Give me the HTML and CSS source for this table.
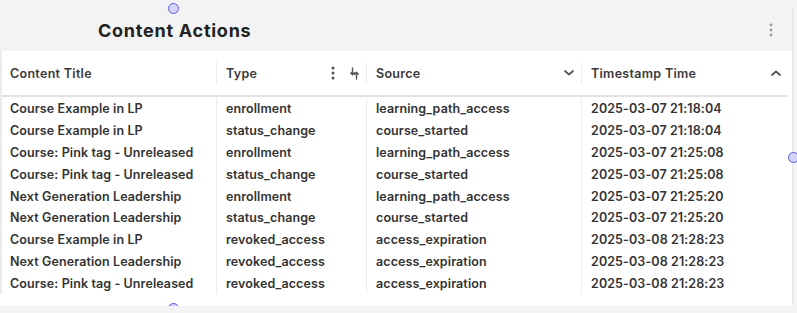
FILE: index.html
```html
<!DOCTYPE html>
<html lang="en">
<head>
  <meta charset="UTF-8" />
  <title>Content Actions</title>
  <link rel="stylesheet" href="styles.css">
</head>
<body>

<div class="card">
  <div class="card-head">
    <h2>Content Actions</h2>
    <svg class="kebab light" width="4" height="14" viewBox="0 0 4 14"><circle cx="2" cy="2" r="1.4"/><circle cx="2" cy="7" r="1.4"/><circle cx="2" cy="12" r="1.4"/></svg>
  </div>

  <div class="table">
    <div class="row head">
      <div class="cell">Content Title</div>
      <div class="cell">
        <span>Type</span>
        <span class="tools">
          <svg class="kebab" width="4" height="14" viewBox="0 0 4 14"><circle cx="2" cy="2" r="1.5"/><circle cx="2" cy="7" r="1.5"/><circle cx="2" cy="12" r="1.5"/></svg>
          <svg class="sort" width="9" height="13" viewBox="0 0 9 13"><path d="M2.5 1v6.5M0.8 5.8l1.7 1.9 1.7-1.9M6.5 12V5.5M4.8 7.2l1.7-1.9 1.7 1.9"/></svg>
        </span>
      </div>
      <div class="cell">
        <span>Source</span>
        <svg class="chev" width="10" height="6" viewBox="0 0 10 6"><path d="M1 1l4 3.5L9 1"/></svg>
      </div>
      <div class="cell">
        <span>Timestamp Time</span>
        <svg class="chev" width="10" height="6" viewBox="0 0 10 6"><path d="M1 5l4-3.5L9 5"/></svg>
      </div>
    </div>

    <div class="body" id="rows"></div>
  </div>

  <span class="handle top"></span>
  <span class="handle right"></span>
  <span class="handle bottom"></span>
</div>

<script>
const data = [
  ["Course Example in LP", "enrollment", "learning_path_access", "2025-03-07 21:18:04"],
  ["Course Example in LP", "status_change", "course_started", "2025-03-07 21:18:04"],
  ["Course: Pink tag - Unreleased", "enrollment", "learning_path_access", "2025-03-07 21:25:08"],
  ["Course: Pink tag - Unreleased", "status_change", "course_started", "2025-03-07 21:25:08"],
  ["Next Generation Leadership", "enrollment", "learning_path_access", "2025-03-07 21:25:20"],
  ["Next Generation Leadership", "status_change", "course_started", "2025-03-07 21:25:20"],
  ["Course Example in LP", "revoked_access", "access_expiration", "2025-03-08 21:28:23"],
  ["Next Generation Leadership", "revoked_access", "access_expiration", "2025-03-08 21:28:23"],
  ["Course: Pink tag - Unreleased", "revoked_access", "access_expiration", "2025-03-08 21:28:23"]
];

const body = document.getElementById("rows");
data.forEach(r => {
  const div = document.createElement("div");
  div.className = "row";
  div.innerHTML = r.map(v => `<div class="cell">${v}</div>`).join("");
  body.appendChild(div);
});
</script>

</body>
</html>
```

FILE: styles.css
```css
body {
  margin: 0;
  background: #f4f4f6;
  font-family: 'Inter', 'Open Sans', sans-serif;
  color: #333;
}
.card {
  position: relative;
  margin: 8px 4px 0 0;
  height: 298px;
  background: #fff;
  border-right: 1px solid #e6e6ea;
}
.card-head {
  height: 42px;
  background: #f3f3f3;
  display: flex;
  align-items: center;
  justify-content: space-between;
  padding: 1px 19px 0 98px;
}
.card-head h2 {
  margin: 0;
  font-size: 18px;
  font-weight: 700;
  color: #222;
  letter-spacing: 0.75px;
}
.kebab {
  fill: #555;
}
.kebab.light {
  fill: #9a9a9a;
}
.table {
  border-left: 2px solid #ececec;
}
.row {
  display: grid;
  grid-template-columns: 214px 150px 215px 1fr;
  height: 21.8px;
  align-items: stretch;
}
.row .cell {
  display: flex;
  align-items: center;
  padding: 0 8px 0 8px;
  font-size: 12.5px;
  font-weight: 600;
  letter-spacing: 0.1px;
  white-space: nowrap;
}
.row .cell + .cell {
  border-left: 1px solid #ececec;
  padding-left: 9px;
}
.row.head {
  height: 44px;
  border-bottom: 2px solid #e2e2e2;
  margin-right: 4px;
}
.row.head .cell {
  justify-content: space-between;
  color: #3a3a3a;
  margin: 11px 0;
  padding-right: 7px;
  letter-spacing: 0.3px;
}
.body {
  padding-top: 1px;
}
.body .row .cell {
  color: #333;
}
.tools {
  display: flex;
  align-items: center;
  gap: 15px;
}
.sort path, .chev path {
  fill: none;
  stroke: #555;
  stroke-width: 1.4;
  stroke-linecap: round;
  stroke-linejoin: round;
}
.chev path {
  stroke-width: 1.8;
}
.handle {
  position: absolute;
  width: 9px;
  height: 9px;
  border-radius: 50%;
  background: #d4d4fa;
  border: 1px solid #5a5ae0;
}
.handle.top {
  left: 168px;
  top: -5px;
}
.handle.right {
  right: -7px;
  top: 144px;
}
.handle.bottom {
  left: 168px;
  bottom: -8px;
}
```
